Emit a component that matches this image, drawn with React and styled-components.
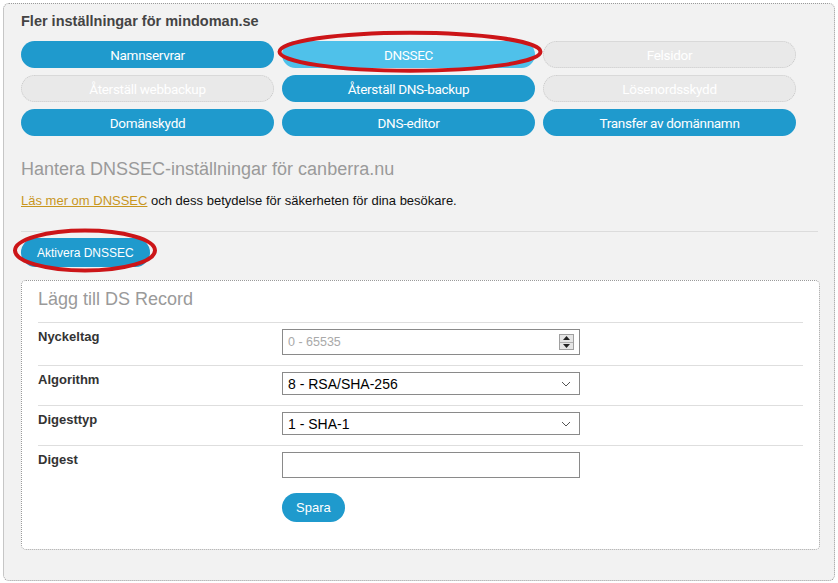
import React from "react";
import styled, { createGlobalStyle } from "styled-components";

const Global = createGlobalStyle`
  html, body { margin: 0; padding: 0; background: #ffffff; }
  body { font-family: "Liberation Sans", Arial, sans-serif; }
  * { box-sizing: border-box; }
`;

const Stage = styled.div`
  position: relative;
  width: 838px;
  height: 583px;
  padding: 3px;
`;

const Panel = styled.div`
  width: 832px;
  background: #f2f2f2;
  border: 1px dotted #9a9a9a;
  border-radius: 6px;
  padding: 9px 0 30px 17px;
`;

const Title = styled.h2`
  margin: 0;
  font-family: "Liberation Sans", Arial, sans-serif;
  font-size: 14.5px;
  line-height: 17px;
  font-weight: bold;
  color: #444444;
`;

const NavGrid = styled.div`
  margin-top: 11px;
  width: 775px;
  display: grid;
  grid-template-columns: repeat(3, 1fr);
  column-gap: 8px;
  row-gap: 7px;
`;

const NavButton = styled.div`
  height: 27px;
  border-radius: 14px;
  display: flex;
  align-items: center;
  justify-content: center;
  font-family: Roboto, "Liberation Sans", sans-serif;
  font-size: 13.5px;
  letter-spacing: -0.3px;
  color: #ffffff;
  background: ${(p) =>
    p.$state === "active" ? "#4fc1ea" : p.$state === "disabled" ? "#e9e9e9" : "#1f9acd"};
  border: 1px ${(p) => (p.$state === "disabled" ? "dotted #c9c9c9" : "solid transparent")};
`;

const Heading = styled.h3`
  margin: 22px 0 0;
  font-family: "Liberation Sans", Arial, sans-serif;
  font-size: 18px;
  line-height: 22px;
  font-weight: normal;
  color: #9a9a9a;
`;

const Para = styled.p`
  margin: 13px 0 0;
  font-family: "Liberation Sans", Arial, sans-serif;
  font-size: 13px;
  line-height: 16px;
  color: #111111;
`;

const Link = styled.a`
  color: #c8961e;
  text-decoration: underline;
`;

const Divider = styled.div`
  margin-top: 22px;
  width: 797px;
  height: 1px;
  background: #dcdcdc;
`;

const PillButton = styled.div`
  display: inline-flex;
  align-items: center;
  height: 29px;
  margin-top: ${(p) => p.$mt || 0}px;
  padding: 0 ${(p) => p.$px || 16}px;
  border-radius: 15px;
  background: #1f9acd;
  color: #ffffff;
  font-family: "Liberation Sans", Arial, sans-serif;
  font-size: ${(p) => p.$fs || 12}px;
`;

const Card = styled.div`
  margin-top: 13px;
  width: 799px;
  background: #ffffff;
  border: 1px dotted #9a9a9a;
  border-radius: 5px;
  padding: 7px 16px 27px 16px;
`;

const CardHeading = styled.h3`
  margin: 0 0 12px;
  font-family: "Liberation Sans", Arial, sans-serif;
  font-size: 18px;
  line-height: 22px;
  font-weight: normal;
  color: #9a9a9a;
`;

const Row = styled.div`
  display: grid;
  grid-template-columns: 244px 298px;
  align-items: start;
  border-top: 1px solid #dedede;
  padding: 6px 0 ${(p) => (p.$last ? 0 : 10)}px;
`;

const Label = styled.div`
  font-family: "Liberation Sans", Arial, sans-serif;
  font-size: 13px;
  line-height: 16px;
  font-weight: bold;
  color: #333333;
`;

const Field = styled.div`
  height: ${(p) => p.$h || 26}px;
  border: 1px solid #8a8a8a;
  background: #ffffff;
  display: flex;
  align-items: center;
  padding: 0 5px 0 5px;
  font-family: "Liberation Sans", Arial, sans-serif;
  font-size: ${(p) => (p.$placeholder ? 12.5 : 14)}px;
  color: ${(p) => (p.$placeholder ? "#a9a9a9" : "#000000")};
`;

const FieldText = styled.span`
  flex: 1;
  white-space: nowrap;
`;

const Spinner = styled.div`
  width: 15px;
  height: 16px;
  display: flex;
  flex-direction: column;
  border: 1px solid #a0a0a0;
  background: #e6e6e6;
`;

const SpinHalf = styled.div`
  flex: 1;
  display: flex;
  align-items: center;
  justify-content: center;
  & + & { border-top: 1px solid #b0b0b0; }
`;

const Chevron = () => (
  <svg width="10" height="6" viewBox="0 0 10 6" style={{ marginRight: 3 }}>
    <path d="M1 1 L5 5 L9 1" fill="none" stroke="#555" strokeWidth="1" />
  </svg>
);

const Tri = ({ up }) => (
  <svg width="7" height="4" viewBox="0 0 7 4">
    <path d={up ? "M0 4 L3.5 0 L7 4 Z" : "M0 0 L3.5 4 L7 0 Z"} fill="#222" />
  </svg>
);

const Actions = styled.div`
  margin-top: 15px;
  padding-left: 244px;
`;

const Annotation = styled.svg`
  position: absolute;
  left: 0;
  top: 0;
  pointer-events: none;
`;

const navItems = [
  ["Namnservrar", "normal"],
  ["DNSSEC", "active"],
  ["Felsidor", "disabled"],
  ["Återställ webbackup", "disabled"],
  ["Återställ DNS-backup", "normal"],
  ["Lösenordsskydd", "disabled"],
  ["Domänskydd", "normal"],
  ["DNS-editor", "normal"],
  ["Transfer av domännamn", "normal"],
];

export default function App() {
  return (
    <>
      <Global />
      <Stage>
        <Panel>
          <Title>Fler inställningar för mindoman.se</Title>
          <NavGrid>
            {navItems.map(([t, s]) => (
              <NavButton key={t} $state={s}>
                {t}
              </NavButton>
            ))}
          </NavGrid>
          <Heading>Hantera DNSSEC-inställningar för canberra.nu</Heading>
          <Para>
            <Link>Läs mer om DNSSEC</Link> och dess betydelse för säkerheten för dina besökare.
          </Para>
          <Divider />
          <PillButton $mt={6}>Aktivera DNSSEC</PillButton>
          <Card>
            <CardHeading>Lägg till DS Record</CardHeading>
            <Row>
              <Label>Nyckeltag</Label>
              <Field $placeholder>
                <FieldText>0 - 65535</FieldText>
                <Spinner>
                  <SpinHalf>
                    <Tri up />
                  </SpinHalf>
                  <SpinHalf>
                    <Tri />
                  </SpinHalf>
                </Spinner>
              </Field>
            </Row>
            <Row>
              <Label>Algorithm</Label>
              <Field $h={23}>
                <FieldText>8 - RSA/SHA-256</FieldText>
                <Chevron />
              </Field>
            </Row>
            <Row>
              <Label>Digesttyp</Label>
              <Field $h={23}>
                <FieldText>1 - SHA-1</FieldText>
                <Chevron />
              </Field>
            </Row>
            <Row $last>
              <Label>Digest</Label>
              <Field />
            </Row>
            <Actions>
              <PillButton $px={14} $fs={13}>Spara</PillButton>
            </Actions>
          </Card>
        </Panel>
        <Annotation width="838" height="583">
          <ellipse cx="410" cy="51.7" rx="130.5" ry="19" fill="none" stroke="#cc1518" strokeWidth="4" />
          <ellipse cx="85" cy="250.5" rx="70" ry="20" fill="none" stroke="#cc1518" strokeWidth="4" />
        </Annotation>
      </Stage>
    </>
  );
}
